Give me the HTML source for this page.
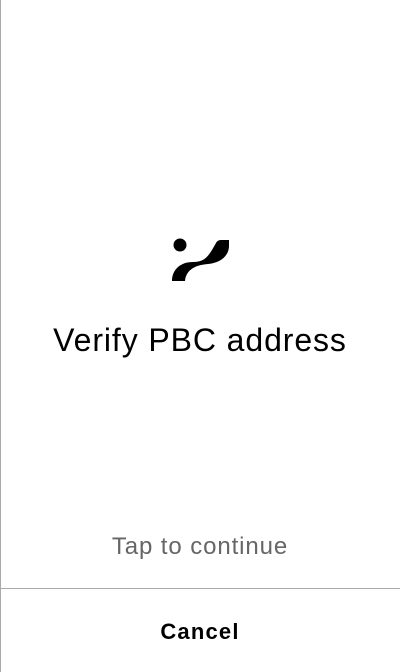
<!DOCTYPE html>
<html><head><style>
html,body{margin:0;padding:0;width:400px;height:672px;background:#fff;overflow:hidden;font-family:"Liberation Sans",sans-serif}
.l{position:absolute;left:0;top:0;width:1px;height:672px;background:#aaa}
.hr{position:absolute;left:0;top:588px;width:400px;height:1px;background:#aaa}
.t{position:absolute;left:0;width:400px;text-align:center;white-space:nowrap}
</style></head><body>
<div class="l"></div>
<svg style="position:absolute;left:0;top:0" width="400" height="300">
<circle cx="180" cy="245" r="6.5" fill="#000"/>
<path d="M172,281 C172,270 180,262 193,262 C203,262 207,258 212,250 L216,243 C217,241 219,240 221,240 L229,240 L229,246 C229,256 220,263 208,264 C195,265 186,270 185,281 Z" fill="#000"/>
</svg>
<div class="t" style="top:322px;font-size:32px;color:#000;letter-spacing:0.9px">Verify PBC address</div>
<div class="t" style="top:533px;font-size:24px;color:#666;letter-spacing:0.9px">Tap to continue</div>
<div class="hr"></div>
<div class="t" style="top:619px;font-size:22px;font-weight:bold;color:#000;letter-spacing:1.2px">Cancel</div>
</body></html>
